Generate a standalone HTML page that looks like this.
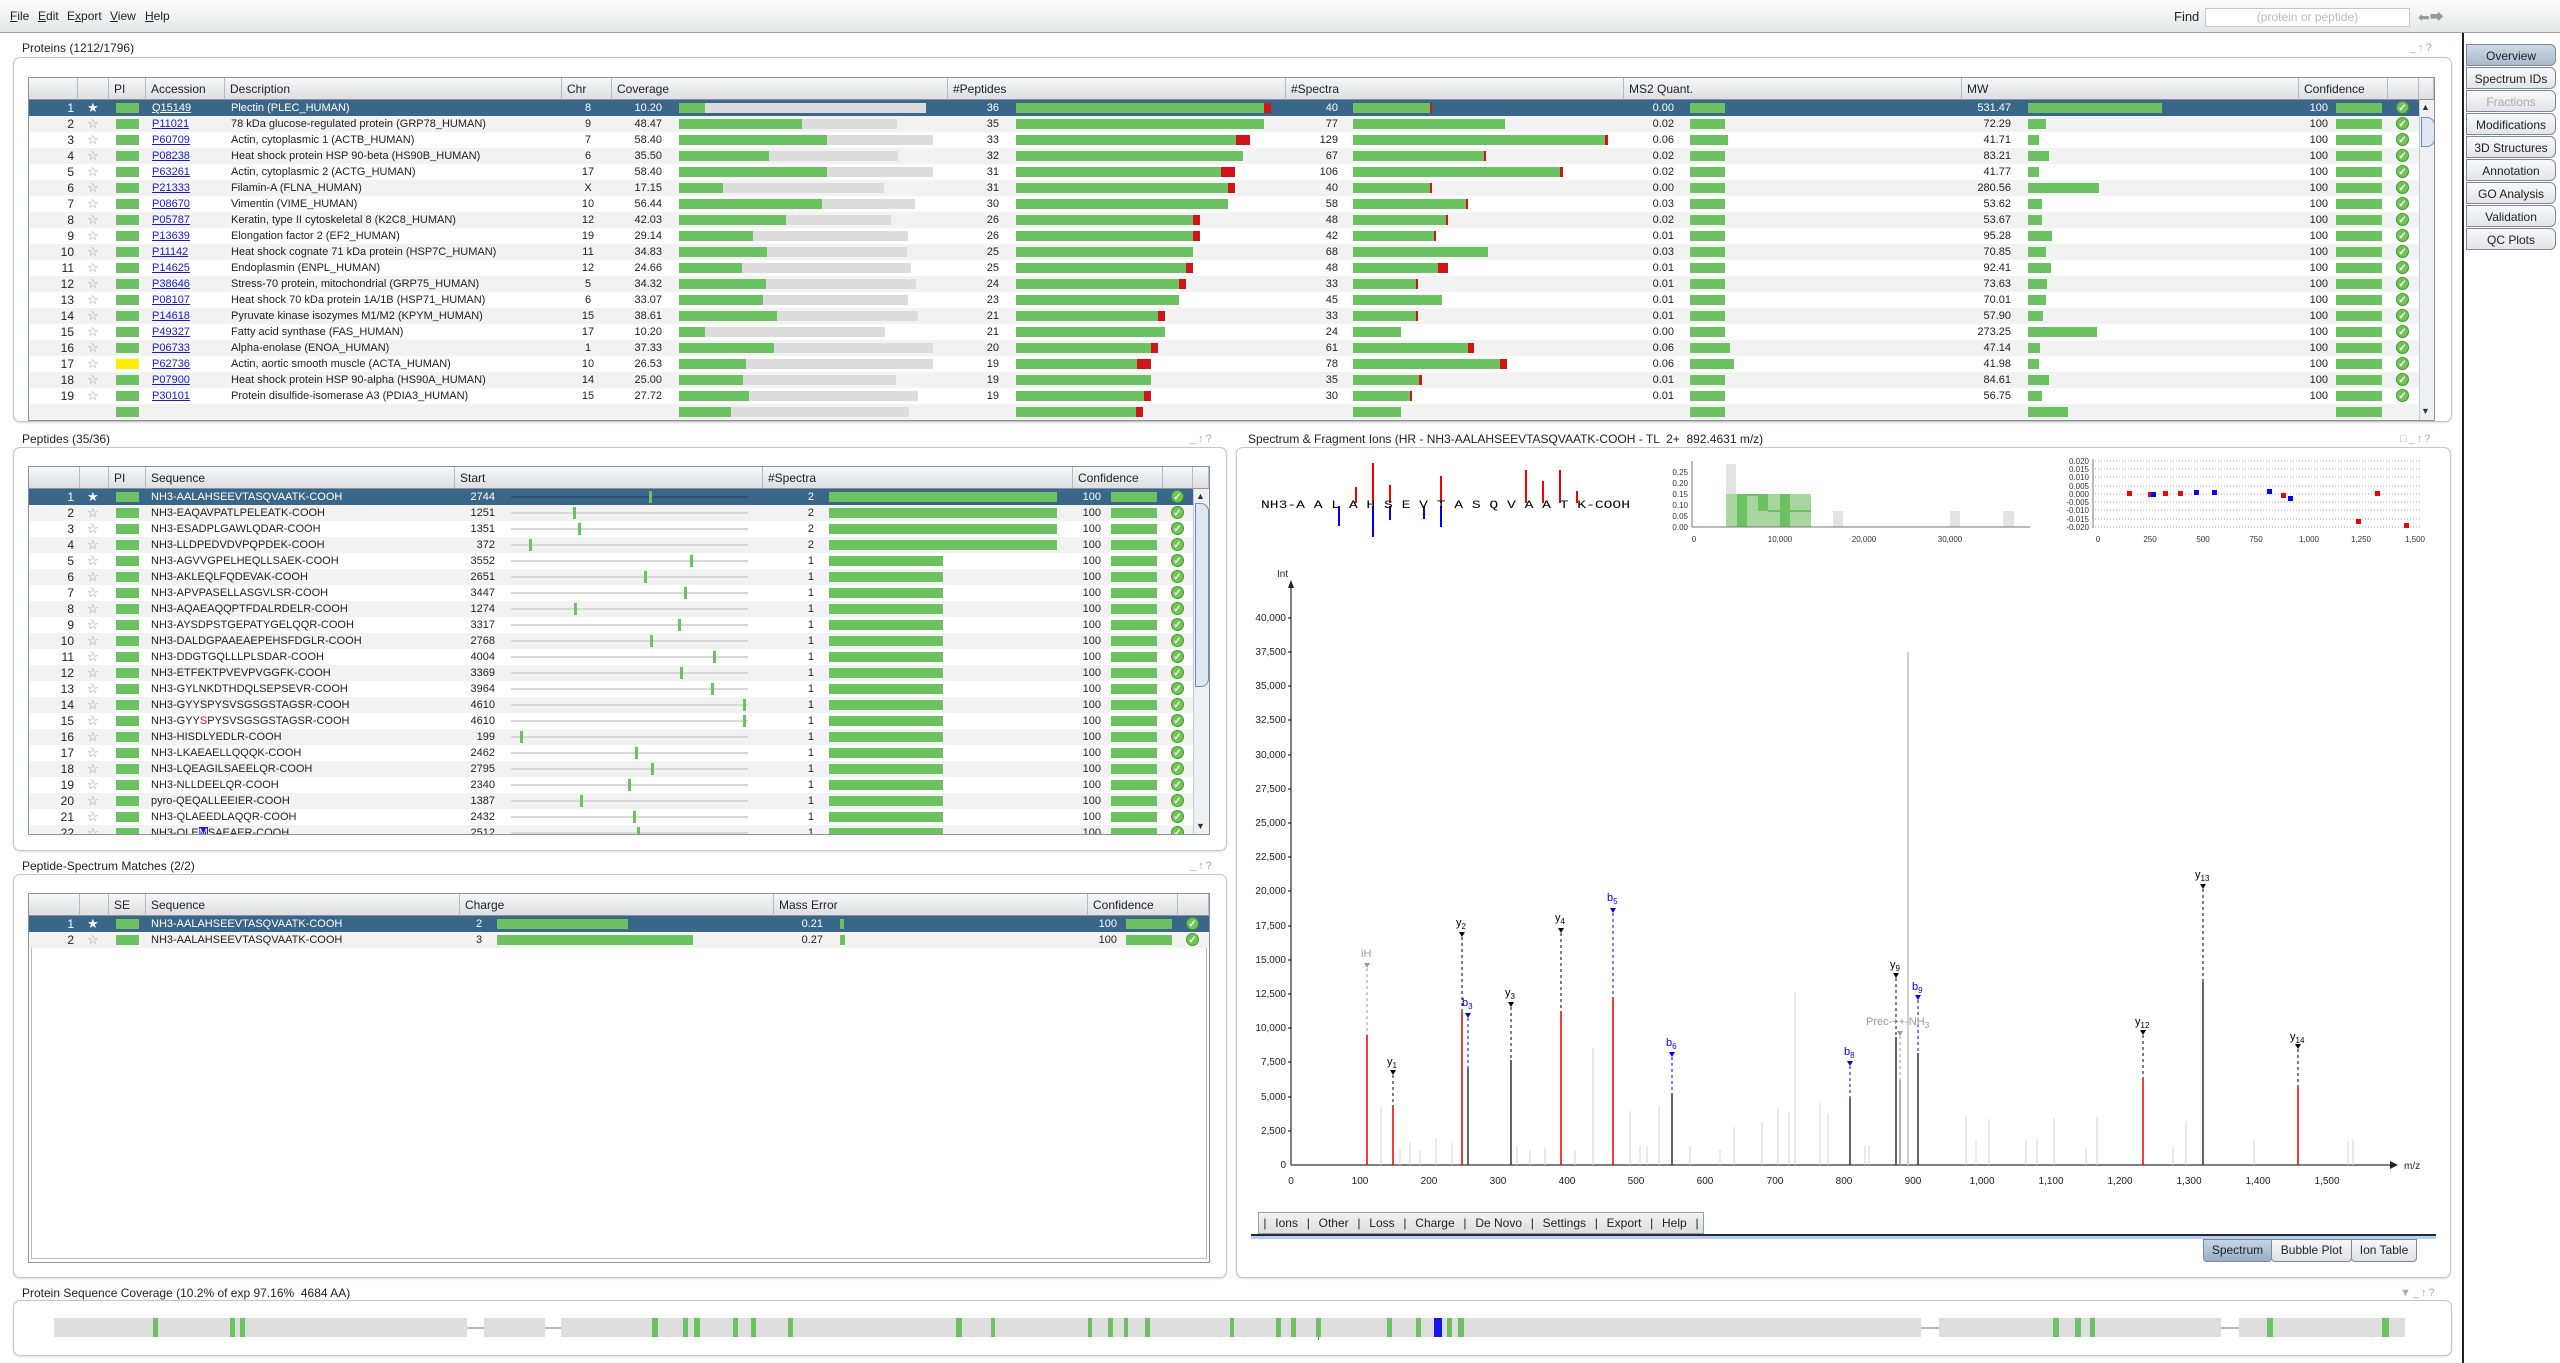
<!DOCTYPE html>
<html><head><meta charset="utf-8">
<style>
body{margin:0;width:2560px;height:1363px;position:relative;overflow:hidden;background:#fff;font-family:"Liberation Sans",sans-serif;font-size:11px;color:#222}
.a{position:absolute}
.menu{left:0;top:0;width:2560px;height:32px;background:linear-gradient(#fdfdfd,#e4e6ea);border-bottom:1px solid #9da2aa}
.menu span{position:absolute;top:9px;font-size:12px}
.panel{position:absolute;border:1px solid #c6c6c6;border-radius:7px;box-shadow:0 1px 2px #ddd;background:#fff}
.ttl{position:absolute;font-size:12px;color:#222}
.ico{position:absolute;font-size:11px;color:#aaa;letter-spacing:2px}
.tbl{position:absolute;border:1px solid #8d929a;background:#fff;overflow:hidden}
.hd{position:absolute;top:0;height:22px;background:linear-gradient(#f8f8fa,#dcdee3);border-bottom:1px solid #8d929a;border-right:1px solid #b5b9c0;box-sizing:border-box;padding-left:5px;line-height:22px;font-size:12px}
.r{position:absolute;left:0;height:16px;width:100%;line-height:16px;font-size:11px}
.o{background:#f2f2f2}
.s{background:#3a6689;color:#fff}
.r span,.r b,.r i{position:absolute}
.n{left:0;width:45px;text-align:right;font-size:12px}
.st{left:58px;color:#999;font-size:13px}
.s .st{color:#fff}
.pi{left:87px;top:3px;width:23px;height:10px;background:#6cc260}
.ac{left:123px;color:#1a1acc;text-decoration:underline}
.s .ac{color:#fff}
.ds{left:202px}
.ch{left:541px;width:36px;text-align:center}
.cv{left:590px;width:43px;text-align:right}
.pn{left:930px;width:40px;text-align:right}
.sn{left:1269px;width:40px;text-align:right}
.mn{left:1600px;width:45px;text-align:right}
.wn{left:1930px;width:52px;text-align:right}
.cn{left:2269px;width:30px;text-align:right}
.g{top:3px;height:10px;background:#6cc260}
.d{top:3px;height:10px;background:#d0151a}
.k{top:3px;height:10px;background:#dcdcdc}
.ck{top:1px;width:13px;height:13px;border-radius:50%;background:#72c456;border:1px solid #3d9a2c;color:#fff;font-size:10px;line-height:13px;text-align:center;box-sizing:border-box}
.tk{top:7px;height:2px;left:482px;width:237px;background:#d8d8d8}
.s .tk{background:#2c5374}
.mk{top:2px;width:3px;height:12px;background:#6cc260}
.sb{position:absolute;background:#eef0f3;border-left:1px solid #c8ccd2}
.btn{position:absolute;left:2466px;width:90px;height:22px;border:1px solid #7f8896;border-radius:0 6px 6px 0;background:linear-gradient(#f7f8fa,#e2e5ea);font-size:12px;text-align:center;line-height:22px;box-sizing:border-box}
.bb{position:absolute;left:1258px;top:1212px;width:444px;height:20px;background:linear-gradient(#f3f3f5,#dcdde1);border:1px solid #9a9ea6;font-size:12px;line-height:20px;color:#222;display:flex;justify-content:space-around}
</style></head><body>

<div class="a menu">
<span style="left:10px"><u>F</u>ile</span><span style="left:38px"><u>E</u>dit</span><span style="left:67px">E<u>x</u>port</span><span style="left:110px"><u>V</u>iew</span><span style="left:145px"><u>H</u>elp</span>
<span style="left:2174px;font-size:13px">Find</span>
<div class="a" style="left:2205px;top:8px;width:203px;height:17px;background:#fff;border:1px solid #c4c7cc;color:#bbb;font-size:12px;text-align:center;line-height:17px">(protein or peptide)</div>
<span style="left:2418px;top:7px;color:#999;font-size:14px">&#x2B05;&#x2B95;</span>
</div>

<div class="a" style="left:2462px;top:33px;width:2px;height:1330px;background:#1b1f2a"></div>
<div class="btn" style="top:44px;background:linear-gradient(#cfd9e5,#a9b9cc)">Overview</div>
<div class="btn" style="top:67px">Spectrum IDs</div>
<div class="btn" style="top:90px;color:#aaa">Fractions</div>
<div class="btn" style="top:113px">Modifications</div>
<div class="btn" style="top:136px">3D Structures</div>
<div class="btn" style="top:159px">Annotation</div>
<div class="btn" style="top:182px">GO Analysis</div>
<div class="btn" style="top:205px">Validation</div>
<div class="btn" style="top:228px">QC Plots</div>

<div class="ttl" style="left:22px;top:41px">Proteins (1212/1796)</div>
<div class="ico" style="left:2410px;top:42px">_&#x2191;?</div>
<div class="panel" style="left:13px;top:57px;width:2437px;height:363px"></div>
<div class="tbl" style="left:28px;top:77px;width:2405px;height:342px">
<div class="hd" style="left:0;width:49px"></div><div class="hd" style="left:49px;width:31px"></div><div class="hd" style="left:80px;width:37px">PI</div><div class="hd" style="left:117px;width:79px">Accession</div><div class="hd" style="left:196px;width:337px">Description</div><div class="hd" style="left:533px;width:50px">Chr</div><div class="hd" style="left:583px;width:336px">Coverage</div><div class="hd" style="left:919px;width:338px">#Peptides</div><div class="hd" style="left:1257px;width:338px">#Spectra</div><div class="hd" style="left:1595px;width:338px">MS2 Quant.</div><div class="hd" style="left:1933px;width:337px">MW</div><div class="hd" style="left:2270px;width:89px">Confidence</div><div class="hd" style="left:2359px;width:31px"></div><div class="hd" style="left:2390px;width:15px"></div>

<div class="r s" style="top:22px"><span class="n">1</span><span class="st">★</span><i class="pi"></i><span class="ac">Q15149</span><span class="ds">Plectin (PLEC_HUMAN)</span><span class="ch">8</span><span class="cv">10.20</span><b class="k" style="left:650px;width:247px"></b><b class="g" style="left:650px;width:26px"></b><span class="pn">36</span><b class="g" style="left:987px;width:248px"></b><b class="d" style="left:1235px;width:7px"></b><span class="sn">40</span><b class="g" style="left:1324px;width:77px"></b><b class="d" style="left:1401px;width:2px"></b><span class="mn">0.00</span><b class="g" style="left:1661px;width:35px"></b><span class="wn">531.47</span><b class="g" style="left:1999px;width:134px"></b><span class="cn">100</span><b class="g" style="left:2307px;width:46px"></b><b class="ck" style="left:2367px">✓</b></div>
<div class="r o" style="top:38px"><span class="n">2</span><span class="st">☆</span><i class="pi"></i><span class="ac">P11021</span><span class="ds">78 kDa glucose-regulated protein (GRP78_HUMAN)</span><span class="ch">9</span><span class="cv">48.47</span><b class="k" style="left:650px;width:218px"></b><b class="g" style="left:650px;width:123px"></b><span class="pn">35</span><b class="g" style="left:987px;width:248px"></b><span class="sn">77</span><b class="g" style="left:1324px;width:152px"></b><span class="mn">0.02</span><b class="g" style="left:1661px;width:35px"></b><span class="wn">72.29</span><b class="g" style="left:1999px;width:18px"></b><span class="cn">100</span><b class="g" style="left:2307px;width:46px"></b><b class="ck" style="left:2367px">✓</b></div>
<div class="r" style="top:54px"><span class="n">3</span><span class="st">☆</span><i class="pi"></i><span class="ac">P60709</span><span class="ds">Actin, cytoplasmic 1 (ACTB_HUMAN)</span><span class="ch">7</span><span class="cv">58.40</span><b class="k" style="left:650px;width:254px"></b><b class="g" style="left:650px;width:148px"></b><span class="pn">33</span><b class="g" style="left:987px;width:220px"></b><b class="d" style="left:1207px;width:14px"></b><span class="sn">129</span><b class="g" style="left:1324px;width:252px"></b><b class="d" style="left:1576px;width:3px"></b><span class="mn">0.06</span><b class="g" style="left:1661px;width:38px"></b><span class="wn">41.71</span><b class="g" style="left:1999px;width:11px"></b><span class="cn">100</span><b class="g" style="left:2307px;width:46px"></b><b class="ck" style="left:2367px">✓</b></div>
<div class="r o" style="top:70px"><span class="n">4</span><span class="st">☆</span><i class="pi"></i><span class="ac">P08238</span><span class="ds">Heat shock protein HSP 90-beta (HS90B_HUMAN)</span><span class="ch">6</span><span class="cv">35.50</span><b class="k" style="left:650px;width:219px"></b><b class="g" style="left:650px;width:90px"></b><span class="pn">32</span><b class="g" style="left:987px;width:227px"></b><span class="sn">67</span><b class="g" style="left:1324px;width:131px"></b><b class="d" style="left:1455px;width:2px"></b><span class="mn">0.02</span><b class="g" style="left:1661px;width:35px"></b><span class="wn">83.21</span><b class="g" style="left:1999px;width:21px"></b><span class="cn">100</span><b class="g" style="left:2307px;width:46px"></b><b class="ck" style="left:2367px">✓</b></div>
<div class="r" style="top:86px"><span class="n">5</span><span class="st">☆</span><i class="pi"></i><span class="ac">P63261</span><span class="ds">Actin, cytoplasmic 2 (ACTG_HUMAN)</span><span class="ch">17</span><span class="cv">58.40</span><b class="k" style="left:650px;width:254px"></b><b class="g" style="left:650px;width:148px"></b><span class="pn">31</span><b class="g" style="left:987px;width:205px"></b><b class="d" style="left:1192px;width:14px"></b><span class="sn">106</span><b class="g" style="left:1324px;width:207px"></b><b class="d" style="left:1531px;width:3px"></b><span class="mn">0.02</span><b class="g" style="left:1661px;width:35px"></b><span class="wn">41.77</span><b class="g" style="left:1999px;width:11px"></b><span class="cn">100</span><b class="g" style="left:2307px;width:46px"></b><b class="ck" style="left:2367px">✓</b></div>
<div class="r o" style="top:102px"><span class="n">6</span><span class="st">☆</span><i class="pi"></i><span class="ac">P21333</span><span class="ds">Filamin-A (FLNA_HUMAN)</span><span class="ch">X</span><span class="cv">17.15</span><b class="k" style="left:650px;width:205px"></b><b class="g" style="left:650px;width:44px"></b><span class="pn">31</span><b class="g" style="left:987px;width:212px"></b><b class="d" style="left:1199px;width:7px"></b><span class="sn">40</span><b class="g" style="left:1324px;width:77px"></b><b class="d" style="left:1401px;width:2px"></b><span class="mn">0.00</span><b class="g" style="left:1661px;width:35px"></b><span class="wn">280.56</span><b class="g" style="left:1999px;width:71px"></b><span class="cn">100</span><b class="g" style="left:2307px;width:46px"></b><b class="ck" style="left:2367px">✓</b></div>
<div class="r" style="top:118px"><span class="n">7</span><span class="st">☆</span><i class="pi"></i><span class="ac">P08670</span><span class="ds">Vimentin (VIME_HUMAN)</span><span class="ch">10</span><span class="cv">56.44</span><b class="k" style="left:650px;width:236px"></b><b class="g" style="left:650px;width:143px"></b><span class="pn">30</span><b class="g" style="left:987px;width:212px"></b><span class="sn">58</span><b class="g" style="left:1324px;width:113px"></b><b class="d" style="left:1437px;width:2px"></b><span class="mn">0.03</span><b class="g" style="left:1661px;width:35px"></b><span class="wn">53.62</span><b class="g" style="left:1999px;width:14px"></b><span class="cn">100</span><b class="g" style="left:2307px;width:46px"></b><b class="ck" style="left:2367px">✓</b></div>
<div class="r o" style="top:134px"><span class="n">8</span><span class="st">☆</span><i class="pi"></i><span class="ac">P05787</span><span class="ds">Keratin, type II cytoskeletal 8 (K2C8_HUMAN)</span><span class="ch">12</span><span class="cv">42.03</span><b class="k" style="left:650px;width:212px"></b><b class="g" style="left:650px;width:107px"></b><span class="pn">26</span><b class="g" style="left:987px;width:177px"></b><b class="d" style="left:1164px;width:7px"></b><span class="sn">48</span><b class="g" style="left:1324px;width:93px"></b><b class="d" style="left:1417px;width:2px"></b><span class="mn">0.02</span><b class="g" style="left:1661px;width:35px"></b><span class="wn">53.67</span><b class="g" style="left:1999px;width:14px"></b><span class="cn">100</span><b class="g" style="left:2307px;width:46px"></b><b class="ck" style="left:2367px">✓</b></div>
<div class="r" style="top:150px"><span class="n">9</span><span class="st">☆</span><i class="pi"></i><span class="ac">P13639</span><span class="ds">Elongation factor 2 (EF2_HUMAN)</span><span class="ch">19</span><span class="cv">29.14</span><b class="k" style="left:650px;width:229px"></b><b class="g" style="left:650px;width:74px"></b><span class="pn">26</span><b class="g" style="left:987px;width:177px"></b><b class="d" style="left:1164px;width:7px"></b><span class="sn">42</span><b class="g" style="left:1324px;width:81px"></b><b class="d" style="left:1405px;width:2px"></b><span class="mn">0.01</span><b class="g" style="left:1661px;width:35px"></b><span class="wn">95.28</span><b class="g" style="left:1999px;width:24px"></b><span class="cn">100</span><b class="g" style="left:2307px;width:46px"></b><b class="ck" style="left:2367px">✓</b></div>
<div class="r o" style="top:166px"><span class="n">10</span><span class="st">☆</span><i class="pi"></i><span class="ac">P11142</span><span class="ds">Heat shock cognate 71 kDa protein (HSP7C_HUMAN)</span><span class="ch">11</span><span class="cv">34.83</span><b class="k" style="left:650px;width:228px"></b><b class="g" style="left:650px;width:88px"></b><span class="pn">25</span><b class="g" style="left:987px;width:177px"></b><span class="sn">68</span><b class="g" style="left:1324px;width:135px"></b><span class="mn">0.03</span><b class="g" style="left:1661px;width:35px"></b><span class="wn">70.85</span><b class="g" style="left:1999px;width:18px"></b><span class="cn">100</span><b class="g" style="left:2307px;width:46px"></b><b class="ck" style="left:2367px">✓</b></div>
<div class="r" style="top:182px"><span class="n">11</span><span class="st">☆</span><i class="pi"></i><span class="ac">P14625</span><span class="ds">Endoplasmin (ENPL_HUMAN)</span><span class="ch">12</span><span class="cv">24.66</span><b class="k" style="left:650px;width:232px"></b><b class="g" style="left:650px;width:63px"></b><span class="pn">25</span><b class="g" style="left:987px;width:170px"></b><b class="d" style="left:1157px;width:7px"></b><span class="sn">48</span><b class="g" style="left:1324px;width:85px"></b><b class="d" style="left:1409px;width:10px"></b><span class="mn">0.01</span><b class="g" style="left:1661px;width:35px"></b><span class="wn">92.41</span><b class="g" style="left:1999px;width:23px"></b><span class="cn">100</span><b class="g" style="left:2307px;width:46px"></b><b class="ck" style="left:2367px">✓</b></div>
<div class="r o" style="top:198px"><span class="n">12</span><span class="st">☆</span><i class="pi"></i><span class="ac">P38646</span><span class="ds">Stress-70 protein, mitochondrial (GRP75_HUMAN)</span><span class="ch">5</span><span class="cv">34.32</span><b class="k" style="left:650px;width:237px"></b><b class="g" style="left:650px;width:87px"></b><span class="pn">24</span><b class="g" style="left:987px;width:163px"></b><b class="d" style="left:1150px;width:7px"></b><span class="sn">33</span><b class="g" style="left:1324px;width:63px"></b><b class="d" style="left:1387px;width:2px"></b><span class="mn">0.01</span><b class="g" style="left:1661px;width:35px"></b><span class="wn">73.63</span><b class="g" style="left:1999px;width:19px"></b><span class="cn">100</span><b class="g" style="left:2307px;width:46px"></b><b class="ck" style="left:2367px">✓</b></div>
<div class="r" style="top:214px"><span class="n">13</span><span class="st">☆</span><i class="pi"></i><span class="ac">P08107</span><span class="ds">Heat shock 70 kDa protein 1A/1B (HSP71_HUMAN)</span><span class="ch">6</span><span class="cv">33.07</span><b class="k" style="left:650px;width:229px"></b><b class="g" style="left:650px;width:84px"></b><span class="pn">23</span><b class="g" style="left:987px;width:163px"></b><span class="sn">45</span><b class="g" style="left:1324px;width:89px"></b><span class="mn">0.01</span><b class="g" style="left:1661px;width:35px"></b><span class="wn">70.01</span><b class="g" style="left:1999px;width:18px"></b><span class="cn">100</span><b class="g" style="left:2307px;width:46px"></b><b class="ck" style="left:2367px">✓</b></div>
<div class="r o" style="top:230px"><span class="n">14</span><span class="st">☆</span><i class="pi"></i><span class="ac">P14618</span><span class="ds">Pyruvate kinase isozymes M1/M2 (KPYM_HUMAN)</span><span class="ch">15</span><span class="cv">38.61</span><b class="k" style="left:650px;width:239px"></b><b class="g" style="left:650px;width:98px"></b><span class="pn">21</span><b class="g" style="left:987px;width:142px"></b><b class="d" style="left:1129px;width:7px"></b><span class="sn">33</span><b class="g" style="left:1324px;width:63px"></b><b class="d" style="left:1387px;width:2px"></b><span class="mn">0.01</span><b class="g" style="left:1661px;width:35px"></b><span class="wn">57.90</span><b class="g" style="left:1999px;width:15px"></b><span class="cn">100</span><b class="g" style="left:2307px;width:46px"></b><b class="ck" style="left:2367px">✓</b></div>
<div class="r" style="top:246px"><span class="n">15</span><span class="st">☆</span><i class="pi"></i><span class="ac">P49327</span><span class="ds">Fatty acid synthase (FAS_HUMAN)</span><span class="ch">17</span><span class="cv">10.20</span><b class="k" style="left:650px;width:206px"></b><b class="g" style="left:650px;width:26px"></b><span class="pn">21</span><b class="g" style="left:987px;width:149px"></b><span class="sn">24</span><b class="g" style="left:1324px;width:48px"></b><span class="mn">0.00</span><b class="g" style="left:1661px;width:35px"></b><span class="wn">273.25</span><b class="g" style="left:1999px;width:69px"></b><span class="cn">100</span><b class="g" style="left:2307px;width:46px"></b><b class="ck" style="left:2367px">✓</b></div>
<div class="r o" style="top:262px"><span class="n">16</span><span class="st">☆</span><i class="pi"></i><span class="ac">P06733</span><span class="ds">Alpha-enolase (ENOA_HUMAN)</span><span class="ch">1</span><span class="cv">37.33</span><b class="k" style="left:650px;width:254px"></b><b class="g" style="left:650px;width:95px"></b><span class="pn">20</span><b class="g" style="left:987px;width:135px"></b><b class="d" style="left:1122px;width:7px"></b><span class="sn">61</span><b class="g" style="left:1324px;width:115px"></b><b class="d" style="left:1439px;width:6px"></b><span class="mn">0.06</span><b class="g" style="left:1661px;width:40px"></b><span class="wn">47.14</span><b class="g" style="left:1999px;width:12px"></b><span class="cn">100</span><b class="g" style="left:2307px;width:46px"></b><b class="ck" style="left:2367px">✓</b></div>
<div class="r" style="top:278px"><span class="n">17</span><span class="st">☆</span><i class="pi" style="background:#ffee00"></i><span class="ac">P62736</span><span class="ds">Actin, aortic smooth muscle (ACTA_HUMAN)</span><span class="ch">10</span><span class="cv">26.53</span><b class="k" style="left:650px;width:254px"></b><b class="g" style="left:650px;width:67px"></b><span class="pn">19</span><b class="g" style="left:987px;width:121px"></b><b class="d" style="left:1108px;width:14px"></b><span class="sn">78</span><b class="g" style="left:1324px;width:147px"></b><b class="d" style="left:1471px;width:7px"></b><span class="mn">0.06</span><b class="g" style="left:1661px;width:44px"></b><span class="wn">41.98</span><b class="g" style="left:1999px;width:11px"></b><span class="cn">100</span><b class="g" style="left:2307px;width:46px"></b><b class="ck" style="left:2367px">✓</b></div>
<div class="r o" style="top:294px"><span class="n">18</span><span class="st">☆</span><i class="pi"></i><span class="ac">P07900</span><span class="ds">Heat shock protein HSP 90-alpha (HS90A_HUMAN)</span><span class="ch">14</span><span class="cv">25.00</span><b class="k" style="left:650px;width:217px"></b><b class="g" style="left:650px;width:64px"></b><span class="pn">19</span><b class="g" style="left:987px;width:135px"></b><span class="sn">35</span><b class="g" style="left:1324px;width:66px"></b><b class="d" style="left:1390px;width:3px"></b><span class="mn">0.01</span><b class="g" style="left:1661px;width:35px"></b><span class="wn">84.61</span><b class="g" style="left:1999px;width:21px"></b><span class="cn">100</span><b class="g" style="left:2307px;width:46px"></b><b class="ck" style="left:2367px">✓</b></div>
<div class="r" style="top:310px"><span class="n">19</span><span class="st">☆</span><i class="pi"></i><span class="ac">P30101</span><span class="ds">Protein disulfide-isomerase A3 (PDIA3_HUMAN)</span><span class="ch">15</span><span class="cv">27.72</span><b class="k" style="left:650px;width:239px"></b><b class="g" style="left:650px;width:70px"></b><span class="pn">19</span><b class="g" style="left:987px;width:128px"></b><b class="d" style="left:1115px;width:7px"></b><span class="sn">30</span><b class="g" style="left:1324px;width:57px"></b><b class="d" style="left:1381px;width:2px"></b><span class="mn">0.01</span><b class="g" style="left:1661px;width:35px"></b><span class="wn">56.75</span><b class="g" style="left:1999px;width:14px"></b><span class="cn">100</span><b class="g" style="left:2307px;width:46px"></b><b class="ck" style="left:2367px">✓</b></div>
<div class="r o" style="top:326px"><i class="pi"></i><b class="k" style="left:650px;width:230px"></b><b class="g" style="left:650px;width:52px"></b><b class="g" style="left:987px;width:120px"></b><b class="d" style="left:1107px;width:7px"></b><b class="g" style="left:1324px;width:48px"></b><b class="g" style="left:1661px;width:35px"></b><b class="g" style="left:1999px;width:40px"></b><b class="g" style="left:2307px;width:46px"></b></div>
<div class="sb" style="left:2390px;top:22px;width:15px;height:320px"></div>
<div class="a" style="left:2392px;top:24px;font-size:9px;color:#333">▲</div>
<div class="a" style="left:2392px;top:39px;width:12px;height:28px;border:1px solid #6e8db0;border-radius:0 8px 8px 0;background:#dde6f1"></div>
<div class="a" style="left:2392px;top:328px;font-size:9px;color:#333">▼</div>
</div>

<div class="ttl" style="left:22px;top:432px">Peptides (35/36)</div>
<div class="ico" style="left:1190px;top:433px">_&#x2191;?</div>
<div class="panel" style="left:13px;top:447px;width:1212px;height:402px"></div>
<div class="tbl" style="left:28px;top:466px;width:1180px;height:367px">
<div class="hd" style="left:0;width:51px"></div><div class="hd" style="left:51px;width:29px"></div><div class="hd" style="left:80px;width:37px">PI</div><div class="hd" style="left:117px;width:309px">Sequence</div><div class="hd" style="left:426px;width:308px">Start</div><div class="hd" style="left:734px;width:310px">#Spectra</div><div class="hd" style="left:1044px;width:90px">Confidence</div><div class="hd" style="left:1134px;width:30px"></div><div class="hd" style="left:1164px;width:16px"></div>
<div class="r s" style="top:22px"><span class="n">1</span><span class="st">★</span><i class="pi"></i><span style="left:122px">NH3-AALAHSEEVTASQVAATK-COOH</span><span style="left:426px;width:40px;text-align:right">2744</span><b class="tk"></b><b class="mk" style="left:620px"></b><span style="left:745px;width:40px;text-align:right">2</span><b class="g" style="left:800px;width:228px"></b><span style="left:1042px;width:30px;text-align:right">100</span><b class="g" style="left:1082px;width:46px"></b><b class="ck" style="left:1142px">✓</b></div>
<div class="r o" style="top:38px"><span class="n">2</span><span class="st">☆</span><i class="pi"></i><span style="left:122px">NH3-EAQAVPATLPELEATK-COOH</span><span style="left:426px;width:40px;text-align:right">1251</span><b class="tk"></b><b class="mk" style="left:544px"></b><span style="left:745px;width:40px;text-align:right">2</span><b class="g" style="left:800px;width:228px"></b><span style="left:1042px;width:30px;text-align:right">100</span><b class="g" style="left:1082px;width:46px"></b><b class="ck" style="left:1142px">✓</b></div>
<div class="r" style="top:54px"><span class="n">3</span><span class="st">☆</span><i class="pi"></i><span style="left:122px">NH3-ESADPLGAWLQDAR-COOH</span><span style="left:426px;width:40px;text-align:right">1351</span><b class="tk"></b><b class="mk" style="left:549px"></b><span style="left:745px;width:40px;text-align:right">2</span><b class="g" style="left:800px;width:228px"></b><span style="left:1042px;width:30px;text-align:right">100</span><b class="g" style="left:1082px;width:46px"></b><b class="ck" style="left:1142px">✓</b></div>
<div class="r o" style="top:70px"><span class="n">4</span><span class="st">☆</span><i class="pi"></i><span style="left:122px">NH3-LLDPEDVDVPQPDEK-COOH</span><span style="left:426px;width:40px;text-align:right">372</span><b class="tk"></b><b class="mk" style="left:500px"></b><span style="left:745px;width:40px;text-align:right">2</span><b class="g" style="left:800px;width:228px"></b><span style="left:1042px;width:30px;text-align:right">100</span><b class="g" style="left:1082px;width:46px"></b><b class="ck" style="left:1142px">✓</b></div>
<div class="r" style="top:86px"><span class="n">5</span><span class="st">☆</span><i class="pi"></i><span style="left:122px">NH3-AGVVGPELHEQLLSAEK-COOH</span><span style="left:426px;width:40px;text-align:right">3552</span><b class="tk"></b><b class="mk" style="left:661px"></b><span style="left:745px;width:40px;text-align:right">1</span><b class="g" style="left:800px;width:114px"></b><span style="left:1042px;width:30px;text-align:right">100</span><b class="g" style="left:1082px;width:46px"></b><b class="ck" style="left:1142px">✓</b></div>
<div class="r o" style="top:102px"><span class="n">6</span><span class="st">☆</span><i class="pi"></i><span style="left:122px">NH3-AKLEQLFQDEVAK-COOH</span><span style="left:426px;width:40px;text-align:right">2651</span><b class="tk"></b><b class="mk" style="left:615px"></b><span style="left:745px;width:40px;text-align:right">1</span><b class="g" style="left:800px;width:114px"></b><span style="left:1042px;width:30px;text-align:right">100</span><b class="g" style="left:1082px;width:46px"></b><b class="ck" style="left:1142px">✓</b></div>
<div class="r" style="top:118px"><span class="n">7</span><span class="st">☆</span><i class="pi"></i><span style="left:122px">NH3-APVPASELLASGVLSR-COOH</span><span style="left:426px;width:40px;text-align:right">3447</span><b class="tk"></b><b class="mk" style="left:655px"></b><span style="left:745px;width:40px;text-align:right">1</span><b class="g" style="left:800px;width:114px"></b><span style="left:1042px;width:30px;text-align:right">100</span><b class="g" style="left:1082px;width:46px"></b><b class="ck" style="left:1142px">✓</b></div>
<div class="r o" style="top:134px"><span class="n">8</span><span class="st">☆</span><i class="pi"></i><span style="left:122px">NH3-AQAEAQQPTFDALRDELR-COOH</span><span style="left:426px;width:40px;text-align:right">1274</span><b class="tk"></b><b class="mk" style="left:545px"></b><span style="left:745px;width:40px;text-align:right">1</span><b class="g" style="left:800px;width:114px"></b><span style="left:1042px;width:30px;text-align:right">100</span><b class="g" style="left:1082px;width:46px"></b><b class="ck" style="left:1142px">✓</b></div>
<div class="r" style="top:150px"><span class="n">9</span><span class="st">☆</span><i class="pi"></i><span style="left:122px">NH3-AYSDPSTGEPATYGELQQR-COOH</span><span style="left:426px;width:40px;text-align:right">3317</span><b class="tk"></b><b class="mk" style="left:649px"></b><span style="left:745px;width:40px;text-align:right">1</span><b class="g" style="left:800px;width:114px"></b><span style="left:1042px;width:30px;text-align:right">100</span><b class="g" style="left:1082px;width:46px"></b><b class="ck" style="left:1142px">✓</b></div>
<div class="r o" style="top:166px"><span class="n">10</span><span class="st">☆</span><i class="pi"></i><span style="left:122px">NH3-DALDGPAAEAEPEHSFDGLR-COOH</span><span style="left:426px;width:40px;text-align:right">2768</span><b class="tk"></b><b class="mk" style="left:621px"></b><span style="left:745px;width:40px;text-align:right">1</span><b class="g" style="left:800px;width:114px"></b><span style="left:1042px;width:30px;text-align:right">100</span><b class="g" style="left:1082px;width:46px"></b><b class="ck" style="left:1142px">✓</b></div>
<div class="r" style="top:182px"><span class="n">11</span><span class="st">☆</span><i class="pi"></i><span style="left:122px">NH3-DDGTGQLLLPLSDAR-COOH</span><span style="left:426px;width:40px;text-align:right">4004</span><b class="tk"></b><b class="mk" style="left:684px"></b><span style="left:745px;width:40px;text-align:right">1</span><b class="g" style="left:800px;width:114px"></b><span style="left:1042px;width:30px;text-align:right">100</span><b class="g" style="left:1082px;width:46px"></b><b class="ck" style="left:1142px">✓</b></div>
<div class="r o" style="top:198px"><span class="n">12</span><span class="st">☆</span><i class="pi"></i><span style="left:122px">NH3-ETFEKTPVEVPVGGFK-COOH</span><span style="left:426px;width:40px;text-align:right">3369</span><b class="tk"></b><b class="mk" style="left:651px"></b><span style="left:745px;width:40px;text-align:right">1</span><b class="g" style="left:800px;width:114px"></b><span style="left:1042px;width:30px;text-align:right">100</span><b class="g" style="left:1082px;width:46px"></b><b class="ck" style="left:1142px">✓</b></div>
<div class="r" style="top:214px"><span class="n">13</span><span class="st">☆</span><i class="pi"></i><span style="left:122px">NH3-GYLNKDTHDQLSEPSEVR-COOH</span><span style="left:426px;width:40px;text-align:right">3964</span><b class="tk"></b><b class="mk" style="left:682px"></b><span style="left:745px;width:40px;text-align:right">1</span><b class="g" style="left:800px;width:114px"></b><span style="left:1042px;width:30px;text-align:right">100</span><b class="g" style="left:1082px;width:46px"></b><b class="ck" style="left:1142px">✓</b></div>
<div class="r o" style="top:230px"><span class="n">14</span><span class="st">☆</span><i class="pi"></i><span style="left:122px">NH3-GYYSPYSVSGSGSTAGSR-COOH</span><span style="left:426px;width:40px;text-align:right">4610</span><b class="tk"></b><b class="mk" style="left:714px"></b><span style="left:745px;width:40px;text-align:right">1</span><b class="g" style="left:800px;width:114px"></b><span style="left:1042px;width:30px;text-align:right">100</span><b class="g" style="left:1082px;width:46px"></b><b class="ck" style="left:1142px">✓</b></div>
<div class="r" style="top:246px"><span class="n">15</span><span class="st">☆</span><i class="pi"></i><span style="left:122px">NH3-GYY<span style="position:static;color:#e01010">S</span>PYSVSGSGSTAGSR-COOH</span><span style="left:426px;width:40px;text-align:right">4610</span><b class="tk"></b><b class="mk" style="left:714px"></b><span style="left:745px;width:40px;text-align:right">1</span><b class="g" style="left:800px;width:114px"></b><span style="left:1042px;width:30px;text-align:right">100</span><b class="g" style="left:1082px;width:46px"></b><b class="ck" style="left:1142px">✓</b></div>
<div class="r o" style="top:262px"><span class="n">16</span><span class="st">☆</span><i class="pi"></i><span style="left:122px">NH3-HISDLYEDLR-COOH</span><span style="left:426px;width:40px;text-align:right">199</span><b class="tk"></b><b class="mk" style="left:491px"></b><span style="left:745px;width:40px;text-align:right">1</span><b class="g" style="left:800px;width:114px"></b><span style="left:1042px;width:30px;text-align:right">100</span><b class="g" style="left:1082px;width:46px"></b><b class="ck" style="left:1142px">✓</b></div>
<div class="r" style="top:278px"><span class="n">17</span><span class="st">☆</span><i class="pi"></i><span style="left:122px">NH3-LKAEAELLQQQK-COOH</span><span style="left:426px;width:40px;text-align:right">2462</span><b class="tk"></b><b class="mk" style="left:606px"></b><span style="left:745px;width:40px;text-align:right">1</span><b class="g" style="left:800px;width:114px"></b><span style="left:1042px;width:30px;text-align:right">100</span><b class="g" style="left:1082px;width:46px"></b><b class="ck" style="left:1142px">✓</b></div>
<div class="r o" style="top:294px"><span class="n">18</span><span class="st">☆</span><i class="pi"></i><span style="left:122px">NH3-LQEAGILSAEELQR-COOH</span><span style="left:426px;width:40px;text-align:right">2795</span><b class="tk"></b><b class="mk" style="left:622px"></b><span style="left:745px;width:40px;text-align:right">1</span><b class="g" style="left:800px;width:114px"></b><span style="left:1042px;width:30px;text-align:right">100</span><b class="g" style="left:1082px;width:46px"></b><b class="ck" style="left:1142px">✓</b></div>
<div class="r" style="top:310px"><span class="n">19</span><span class="st">☆</span><i class="pi"></i><span style="left:122px">NH3-NLLDEELQR-COOH</span><span style="left:426px;width:40px;text-align:right">2340</span><b class="tk"></b><b class="mk" style="left:599px"></b><span style="left:745px;width:40px;text-align:right">1</span><b class="g" style="left:800px;width:114px"></b><span style="left:1042px;width:30px;text-align:right">100</span><b class="g" style="left:1082px;width:46px"></b><b class="ck" style="left:1142px">✓</b></div>
<div class="r o" style="top:326px"><span class="n">20</span><span class="st">☆</span><i class="pi"></i><span style="left:122px">pyro-QEQALLEEIER-COOH</span><span style="left:426px;width:40px;text-align:right">1387</span><b class="tk"></b><b class="mk" style="left:551px"></b><span style="left:745px;width:40px;text-align:right">1</span><b class="g" style="left:800px;width:114px"></b><span style="left:1042px;width:30px;text-align:right">100</span><b class="g" style="left:1082px;width:46px"></b><b class="ck" style="left:1142px">✓</b></div>
<div class="r" style="top:342px"><span class="n">21</span><span class="st">☆</span><i class="pi"></i><span style="left:122px">NH3-QLAEEDLAQQR-COOH</span><span style="left:426px;width:40px;text-align:right">2432</span><b class="tk"></b><b class="mk" style="left:604px"></b><span style="left:745px;width:40px;text-align:right">1</span><b class="g" style="left:800px;width:114px"></b><span style="left:1042px;width:30px;text-align:right">100</span><b class="g" style="left:1082px;width:46px"></b><b class="ck" style="left:1142px">✓</b></div>
<div class="r o" style="top:358px"><span class="n">22</span><span class="st">☆</span><i class="pi"></i><span style="left:122px">NH3-QLE<span style="position:static;background:#1a1aee;color:#fff">M</span>SAEAER-COOH</span><span style="left:426px;width:40px;text-align:right">2512</span><b class="tk"></b><b class="mk" style="left:608px"></b><span style="left:745px;width:40px;text-align:right">1</span><b class="g" style="left:800px;width:114px"></b><span style="left:1042px;width:30px;text-align:right">100</span><b class="g" style="left:1082px;width:46px"></b><b class="ck" style="left:1142px">✓</b></div>
<div class="sb" style="left:1164px;top:22px;width:16px;height:345px"></div>
<div class="a" style="left:1167px;top:24px;font-size:9px;color:#333">▲</div>
<div class="a" style="left:1166px;top:36px;width:12px;height:182px;border:1px solid #6e8db0;border-radius:0 8px 8px 0;background:#dde6f1"></div>
<div class="a" style="left:1167px;top:354px;font-size:9px;color:#333">▼</div>
</div>

<div class="ttl" style="left:22px;top:859px">Peptide-Spectrum Matches (2/2)</div>
<div class="ico" style="left:1190px;top:860px">_&#x2191;?</div>
<div class="panel" style="left:13px;top:874px;width:1212px;height:402px"></div>
<div class="tbl" style="left:28px;top:893px;width:1180px;height:368px">
<div class="hd" style="left:0;width:51px"></div><div class="hd" style="left:51px;width:29px"></div><div class="hd" style="left:80px;width:37px">SE</div><div class="hd" style="left:117px;width:314px">Sequence</div><div class="hd" style="left:431px;width:314px">Charge</div><div class="hd" style="left:745px;width:314px">Mass Error</div><div class="hd" style="left:1059px;width:90px">Confidence</div><div class="hd" style="left:1149px;width:31px"></div>
<div class="r s" style="top:22px"><span class="n">1</span><span class="st">★</span><i class="pi"></i><span style="left:122px">NH3-AALAHSEEVTASQVAATK-COOH</span><span style="left:447px">2</span><b class="g" style="left:468px;width:131px"></b><span style="left:764px;width:30px;text-align:right">0.21</span><b class="g" style="left:811px;width:4px"></b><span style="left:1058px;width:30px;text-align:right">100</span><b class="g" style="left:1097px;width:46px"></b><b class="ck" style="left:1157px">✓</b></div>
<div class="r o" style="top:38px"><span class="n">2</span><span class="st">☆</span><i class="pi"></i><span style="left:122px">NH3-AALAHSEEVTASQVAATK-COOH</span><span style="left:447px">3</span><b class="g" style="left:468px;width:196px"></b><span style="left:764px;width:30px;text-align:right">0.27</span><b class="g" style="left:811px;width:5px"></b><span style="left:1058px;width:30px;text-align:right">100</span><b class="g" style="left:1097px;width:46px"></b><b class="ck" style="left:1157px">✓</b></div>
<div class="a" style="left:2px;top:54px;width:1174px;height:310px;border:1px solid #b8bcc4;border-top:none"></div>
</div>

<div class="ttl" style="left:1248px;top:432px">Spectrum &amp; Fragment Ions (HR - NH3-AALAHSEEVTASQVAATK-COOH - TL &nbsp;2+ &nbsp;892.4631 m/z)</div>
<div class="ico" style="left:2400px;top:433px">&#x25A1;_&#x2191;?</div>
<div class="panel" style="left:1236px;top:447px;width:1213px;height:829px"></div>

<svg class="a" style="left:1236px;top:447px" width="1214" height="790" viewBox="1236 447 1214 790" font-family="Liberation Sans, sans-serif">
<g stroke-width="2">
<line x1="1356" y1="487" x2="1356" y2="503" stroke="#e00"/><line x1="1373" y1="463" x2="1373" y2="503" stroke="#e00"/><line x1="1390" y1="485" x2="1390" y2="503" stroke="#e00"/><line x1="1441" y1="476" x2="1441" y2="503" stroke="#e00"/><line x1="1526" y1="470" x2="1526" y2="503" stroke="#e00"/><line x1="1543" y1="481" x2="1543" y2="503" stroke="#e00"/><line x1="1560" y1="470" x2="1560" y2="503" stroke="#e00"/><line x1="1577" y1="491" x2="1577" y2="503" stroke="#e00"/>
<line x1="1339" y1="506" x2="1339" y2="526" stroke="#00e"/><line x1="1373" y1="506" x2="1373" y2="537" stroke="#00e"/><line x1="1390" y1="506" x2="1390" y2="520" stroke="#00e"/><line x1="1424" y1="506" x2="1424" y2="519" stroke="#00e"/><line x1="1441" y1="506" x2="1441" y2="527" stroke="#00e"/>
</g>
<text x="1261" y="508" font-family="Liberation Mono, monospace" font-size="11" textLength="369" lengthAdjust="spacingAndGlyphs">NH3-A A L A H S E V T A S Q V A A T K-COOH</text>
<g font-size="8" fill="#333">
<rect x="1726" y="464" width="10" height="63" fill="#e3e3e3"/>
<rect x="1726" y="494" width="85" height="33" fill="#a9d6a0"/>
<rect x="1737" y="494" width="10" height="33" fill="#6cc260"/><rect x="1758" y="494" width="10" height="17" fill="#6cc260"/><rect x="1780" y="494" width="10" height="33" fill="#6cc260"/>
<rect x="1747" y="494" width="11" height="2" fill="#6cc260"/><rect x="1768" y="510" width="12" height="2" fill="#6cc260"/><rect x="1790" y="510" width="21" height="2" fill="#6cc260"/>
<rect x="1833" y="511" width="10" height="16" fill="#e3e3e3"/><rect x="1950" y="511" width="10" height="16" fill="#e3e3e3"/><rect x="2003" y="511" width="11" height="16" fill="#e3e3e3"/>
<line x1="1692" y1="461" x2="1692" y2="527" stroke="#777"/><line x1="1692" y1="527" x2="2030" y2="527" stroke="#777"/>
<text x="1688" y="475" text-anchor="end">0.25</text><text x="1688" y="486" text-anchor="end">0.20</text><text x="1688" y="497" text-anchor="end">0.15</text><text x="1688" y="508" text-anchor="end">0.10</text><text x="1688" y="519" text-anchor="end">0.05</text><text x="1688" y="530" text-anchor="end">0.00</text>
<text x="1694" y="542" text-anchor="middle">0</text><text x="1780" y="542" text-anchor="middle">10,000</text><text x="1864" y="542" text-anchor="middle">20,000</text><text x="1950" y="542" text-anchor="middle">30,000</text>
</g>
<g font-size="8" fill="#333">
<g stroke="#aaa" stroke-dasharray="1,2"><line x1="2095" y1="461" x2="2422" y2="461"/><line x1="2095" y1="469" x2="2422" y2="469"/><line x1="2095" y1="477" x2="2422" y2="477"/><line x1="2095" y1="486" x2="2422" y2="486"/><line x1="2095" y1="494" x2="2422" y2="494"/><line x1="2095" y1="502" x2="2422" y2="502"/><line x1="2095" y1="510" x2="2422" y2="510"/><line x1="2095" y1="519" x2="2422" y2="519"/><line x1="2095" y1="527" x2="2422" y2="527"/></g>
<line x1="2093" y1="459" x2="2093" y2="528" stroke="#777"/>
<text x="2089" y="464" text-anchor="end">0.020</text><text x="2089" y="472" text-anchor="end">0.015</text><text x="2089" y="480" text-anchor="end">0.010</text><text x="2089" y="489" text-anchor="end">0.005</text><text x="2089" y="497" text-anchor="end">0.000</text><text x="2089" y="505" text-anchor="end">-0.005</text><text x="2089" y="513" text-anchor="end">-0.010</text><text x="2089" y="522" text-anchor="end">-0.015</text><text x="2089" y="530" text-anchor="end">-0.020</text>
<text x="2098" y="542" text-anchor="middle">0</text><text x="2150" y="542" text-anchor="middle">250</text><text x="2203" y="542" text-anchor="middle">500</text><text x="2256" y="542" text-anchor="middle">750</text><text x="2309" y="542" text-anchor="middle">1,000</text><text x="2361" y="542" text-anchor="middle">1,250</text><text x="2415" y="542" text-anchor="middle">1,500</text>
<g fill="#e00"><rect x="2127" y="491" width="5" height="5"/><rect x="2148" y="492" width="5" height="5"/><rect x="2163" y="491" width="5" height="5"/><rect x="2178" y="491" width="5" height="5"/><rect x="2281" y="493" width="5" height="5"/><rect x="2375" y="491" width="5" height="5"/><rect x="2356" y="519" width="5" height="5"/><rect x="2404" y="523" width="5" height="5"/></g>
<g fill="#00e"><rect x="2151" y="492" width="5" height="5"/><rect x="2194" y="490" width="5" height="5"/><rect x="2212" y="490" width="5" height="5"/><rect x="2267" y="489" width="5" height="5"/><rect x="2288" y="496" width="5" height="5"/></g>
</g>
<g font-size="10" fill="#222">
<text x="1277" y="577">Int</text>
<line x1="1291" y1="583" x2="1291" y2="1165" stroke="#000"/><path d="M1288 588 L1291 580 L1294 588 Z"/>
<line x1="1291" y1="1165" x2="2392" y2="1165" stroke="#000"/><path d="M2390 1161 L2398 1165 L2390 1169 Z"/>
<text x="2404" y="1169">m/z</text>
<g text-anchor="end">
<text x="1286" y="1168">0</text><text x="1286" y="1134">2,500</text><text x="1286" y="1100">5,000</text><text x="1286" y="1065">7,500</text><text x="1286" y="1031">10,000</text><text x="1286" y="997">12,500</text><text x="1286" y="963">15,000</text><text x="1286" y="929">17,500</text><text x="1286" y="894">20,000</text><text x="1286" y="860">22,500</text><text x="1286" y="826">25,000</text><text x="1286" y="792">27,500</text><text x="1286" y="758">30,000</text><text x="1286" y="723">32,500</text><text x="1286" y="689">35,000</text><text x="1286" y="655">37,500</text><text x="1286" y="621">40,000</text>
</g>
<g stroke="#000"><line x1="1288" y1="1131" x2="1291" y2="1131"/><line x1="1288" y1="1097" x2="1291" y2="1097"/><line x1="1288" y1="1062" x2="1291" y2="1062"/><line x1="1288" y1="1028" x2="1291" y2="1028"/><line x1="1288" y1="994" x2="1291" y2="994"/><line x1="1288" y1="960" x2="1291" y2="960"/><line x1="1288" y1="926" x2="1291" y2="926"/><line x1="1288" y1="891" x2="1291" y2="891"/><line x1="1288" y1="857" x2="1291" y2="857"/><line x1="1288" y1="823" x2="1291" y2="823"/><line x1="1288" y1="789" x2="1291" y2="789"/><line x1="1288" y1="755" x2="1291" y2="755"/><line x1="1288" y1="720" x2="1291" y2="720"/><line x1="1288" y1="686" x2="1291" y2="686"/><line x1="1288" y1="652" x2="1291" y2="652"/><line x1="1288" y1="618" x2="1291" y2="618"/></g>
<g text-anchor="middle">
<text x="1291" y="1184">0</text><text x="1360" y="1184">100</text><text x="1429" y="1184">200</text><text x="1498" y="1184">300</text><text x="1567" y="1184">400</text><text x="1636" y="1184">500</text><text x="1705" y="1184">600</text><text x="1775" y="1184">700</text><text x="1844" y="1184">800</text><text x="1913" y="1184">900</text><text x="1982" y="1184">1,000</text><text x="2051" y="1184">1,100</text><text x="2120" y="1184">1,200</text><text x="2189" y="1184">1,300</text><text x="2258" y="1184">1,400</text><text x="2327" y="1184">1,500</text>
</g>
</g>
<g stroke="#d4d4d4" stroke-width="1">
<line x1="1381" y1="1165" x2="1381" y2="1107"/><line x1="1436" y1="1165" x2="1436" y2="1138"/><line x1="1593" y1="1165" x2="1593" y2="1048"/><line x1="1630" y1="1165" x2="1630" y2="1111"/><line x1="1659" y1="1165" x2="1659" y2="1106"/><line x1="1734" y1="1165" x2="1734" y2="1127"/><line x1="1762" y1="1165" x2="1762" y2="1122"/><line x1="1778" y1="1165" x2="1778" y2="1109"/><line x1="1789" y1="1165" x2="1789" y2="1113"/><line x1="1795" y1="1165" x2="1795" y2="992"/><line x1="1820" y1="1165" x2="1820" y2="1103"/><line x1="1828" y1="1165" x2="1828" y2="1113"/><line x1="1966" y1="1165" x2="1966" y2="1117"/><line x1="1976" y1="1165" x2="1976" y2="1141"/><line x1="1989" y1="1165" x2="1989" y2="1119"/><line x1="2026" y1="1165" x2="2026" y2="1141"/><line x1="2037" y1="1165" x2="2037" y2="1139"/><line x1="2054" y1="1165" x2="2054" y2="1118"/><line x1="2086" y1="1165" x2="2086" y2="1149"/><line x1="2097" y1="1165" x2="2097" y2="1117"/><line x1="2173" y1="1165" x2="2173" y2="1147"/><line x1="2186" y1="1165" x2="2186" y2="1121"/><line x1="2254" y1="1165" x2="2254" y2="1140"/><line x1="2348" y1="1165" x2="2348" y2="1141"/><line x1="2353" y1="1165" x2="2353" y2="1140"/>
<line x1="1400" y1="1165" x2="1400" y2="1148"/><line x1="1410" y1="1165" x2="1410" y2="1142"/><line x1="1420" y1="1165" x2="1420" y2="1150"/><line x1="1452" y1="1165" x2="1452" y2="1143"/><line x1="1517" y1="1165" x2="1517" y2="1146"/><line x1="1530" y1="1165" x2="1530" y2="1150"/><line x1="1545" y1="1165" x2="1545" y2="1148"/><line x1="1575" y1="1165" x2="1575" y2="1150"/><line x1="1640" y1="1165" x2="1640" y2="1146"/><line x1="1647" y1="1165" x2="1647" y2="1146"/><line x1="1690" y1="1165" x2="1690" y2="1146"/><line x1="1720" y1="1165" x2="1720" y2="1150"/><line x1="1865" y1="1165" x2="1865" y2="1146"/><line x1="1869" y1="1165" x2="1869" y2="1146"/>
<line x1="1908" y1="1165" x2="1908" y2="652" stroke="#cfcfcf" stroke-width="2"/>
</g>
<g stroke-width="1.5">
<line x1="1367" y1="1165" x2="1367" y2="1035" stroke="#e00"/><line x1="1393" y1="1165" x2="1393" y2="1106" stroke="#e00"/><line x1="1462" y1="1165" x2="1462" y2="1012" stroke="#e00"/><line x1="1468" y1="1165" x2="1468" y2="1068" stroke="#333"/><line x1="1511" y1="1165" x2="1511" y2="1060" stroke="#333"/><line x1="1561" y1="1165" x2="1561" y2="1011" stroke="#e00"/><line x1="1613" y1="1165" x2="1613" y2="998" stroke="#e00"/><line x1="1672" y1="1165" x2="1672" y2="1094" stroke="#333"/><line x1="1850" y1="1165" x2="1850" y2="1098" stroke="#333"/><line x1="1896" y1="1165" x2="1896" y2="1037" stroke="#333"/><line x1="1900" y1="1165" x2="1900" y2="1080" stroke="#999"/><line x1="1918" y1="1165" x2="1918" y2="1053" stroke="#333"/><line x1="2143" y1="1165" x2="2143" y2="1079" stroke="#e00"/><line x1="2203" y1="1165" x2="2203" y2="982" stroke="#333"/><line x1="2298" y1="1165" x2="2298" y2="1088" stroke="#e00"/>
</g>
<g stroke-dasharray="3,3" stroke-width="1">
<line x1="1367" y1="968" x2="1367" y2="1035" stroke="#999"/><line x1="1393" y1="1075" x2="1393" y2="1106" stroke="#000"/><line x1="1462" y1="937" x2="1462" y2="1012" stroke="#000"/><line x1="1468" y1="1018" x2="1468" y2="1068" stroke="#00e"/><line x1="1511" y1="1007" x2="1511" y2="1060" stroke="#000"/><line x1="1561" y1="933" x2="1561" y2="1011" stroke="#000"/><line x1="1613" y1="913" x2="1613" y2="998" stroke="#00e"/><line x1="1672" y1="1057" x2="1672" y2="1094" stroke="#00e"/><line x1="1850" y1="1066" x2="1850" y2="1098" stroke="#00e"/><line x1="1896" y1="978" x2="1896" y2="1037" stroke="#000"/><line x1="1900" y1="1036" x2="1900" y2="1080" stroke="#999"/><line x1="1918" y1="1000" x2="1918" y2="1053" stroke="#00e"/><line x1="2143" y1="1035" x2="2143" y2="1079" stroke="#000"/><line x1="2203" y1="889" x2="2203" y2="982" stroke="#000"/><line x1="2298" y1="1049" x2="2298" y2="1088" stroke="#000"/>
</g>
<g>
<path d="M1364 963 h6 l-3 5z" fill="#999"/><path d="M1390 1070 h6 l-3 5z"/><path d="M1459 932 h6 l-3 5z"/><path d="M1465 1013 h6 l-3 5z" fill="#00e"/><path d="M1508 1002 h6 l-3 5z"/><path d="M1558 928 h6 l-3 5z"/><path d="M1610 908 h6 l-3 5z" fill="#00e"/><path d="M1669 1052 h6 l-3 5z" fill="#00e"/><path d="M1847 1061 h6 l-3 5z" fill="#00e"/><path d="M1893 973 h6 l-3 5z"/><path d="M1897 1031 h6 l-3 5z" fill="#999"/><path d="M1915 995 h6 l-3 5z" fill="#00e"/><path d="M2140 1030 h6 l-3 5z"/><path d="M2200 884 h6 l-3 5z"/><path d="M2295 1044 h6 l-3 5z"/>
</g>
<g font-size="11">
<text x="1361" y="957" fill="#999">iH</text>
<text x="1387" y="1065">y<tspan font-size="8" dy="3">1</tspan></text>
<text x="1456" y="926">y<tspan font-size="8" dy="3">2</tspan></text>
<text x="1462" y="1006" fill="#00e">b<tspan font-size="8" dy="3">3</tspan></text>
<text x="1505" y="996">y<tspan font-size="8" dy="3">3</tspan></text>
<text x="1555" y="921">y<tspan font-size="8" dy="3">4</tspan></text>
<text x="1607" y="901" fill="#00e">b<tspan font-size="8" dy="3">5</tspan></text>
<text x="1666" y="1046" fill="#00e">b<tspan font-size="8" dy="3">6</tspan></text>
<text x="1844" y="1055" fill="#00e">b<tspan font-size="8" dy="3">8</tspan></text>
<text x="1890" y="968">y<tspan font-size="8" dy="3">9</tspan></text>
<text x="1866" y="1025" fill="#999">Prec-++-NH<tspan font-size="8" dy="3">3</tspan></text>
<text x="1912" y="990" fill="#00e">b<tspan font-size="8" dy="3">9</tspan></text>
<text x="2135" y="1025">y<tspan font-size="8" dy="3">12</tspan></text>
<text x="2195" y="878">y<tspan font-size="8" dy="3">13</tspan></text>
<text x="2290" y="1040">y<tspan font-size="8" dy="3">14</tspan></text>
</g>
</svg>

<div class="bb"><span>|</span><span>Ions</span><span>|</span><span>Other</span><span>|</span><span>Loss</span><span>|</span><span>Charge</span><span>|</span><span>De Novo</span><span>|</span><span>Settings</span><span>|</span><span>Export</span><span>|</span><span>Help</span><span>|</span></div>
<div class="a" style="left:1251px;top:1234px;width:1185px;height:2px;background:#1d2b45"></div>
<div class="a" style="left:1251px;top:1236px;width:1185px;height:3px;background:#b9cfe6"></div>
<div class="a" style="left:2203px;top:1239px;width:67px;height:21px;background:linear-gradient(#c6d5e6,#97aec9);border:1px solid #7e8a99;border-radius:0 0 4px 4px;font-size:12px;text-align:center;line-height:21px">Spectrum</div>
<div class="a" style="left:2271px;top:1239px;width:79px;height:21px;background:linear-gradient(#f5f6f8,#dfe2e7);border:1px solid #7e8a99;border-radius:0 0 4px 4px;font-size:12px;text-align:center;line-height:21px">Bubble Plot</div>
<div class="a" style="left:2351px;top:1239px;width:64px;height:21px;background:linear-gradient(#f5f6f8,#dfe2e7);border:1px solid #7e8a99;border-radius:0 0 4px 4px;font-size:12px;text-align:center;line-height:21px">Ion Table</div>

<div class="ttl" style="left:22px;top:1286px">Protein Sequence Coverage (10.2% of exp 97.16% &nbsp;4684 AA)</div>
<div class="ico" style="left:2400px;top:1287px">&#x25BC;_&#x2191;?</div>
<div class="panel" style="left:13px;top:1300px;width:2437px;height:54px"></div>
<div class="a" style="left:54px;top:1327px;width:2351px;height:2px;background:#b8b8b8"></div>
<div class="a" style="left:54px;top:1318px;width:413px;height:19px;background:#dedede"></div>
<div class="a" style="left:484px;top:1318px;width:61px;height:19px;background:#dedede"></div>
<div class="a" style="left:561px;top:1318px;width:1360px;height:19px;background:#dedede"></div>
<div class="a" style="left:1939px;top:1318px;width:282px;height:19px;background:#dedede"></div>
<div class="a" style="left:2239px;top:1318px;width:166px;height:19px;background:#dedede"></div>
<svg class="a" style="left:0;top:1318px" width="2450" height="22"><g fill="#6cc260">
<rect x="153" y="0" width="5" height="19"/><rect x="230" y="0" width="5" height="19"/><rect x="240" y="0" width="5" height="19"/><rect x="652" y="0" width="6" height="19"/><rect x="683" y="0" width="5" height="19"/><rect x="694" y="0" width="6" height="19"/><rect x="733" y="0" width="5" height="19"/><rect x="751" y="0" width="5" height="19"/><rect x="788" y="0" width="5" height="19"/><rect x="956" y="0" width="6" height="19"/><rect x="991" y="0" width="4" height="19"/><rect x="1088" y="0" width="4" height="19"/><rect x="1108" y="0" width="5" height="19"/><rect x="1124" y="0" width="4" height="19"/><rect x="1145" y="0" width="5" height="19"/><rect x="1230" y="0" width="4" height="19"/><rect x="1276" y="0" width="5" height="19"/><rect x="1291" y="0" width="5" height="19"/><rect x="1316" y="0" width="5" height="19"/><rect x="1387" y="0" width="5" height="19"/><rect x="1416" y="0" width="5" height="19"/><rect x="1447" y="0" width="5" height="19"/><rect x="1458" y="0" width="6" height="19"/><rect x="2053" y="0" width="6" height="19"/><rect x="2075" y="0" width="6" height="19"/><rect x="2090" y="0" width="5" height="19"/><rect x="2267" y="0" width="6" height="19"/><rect x="2382" y="0" width="7" height="19"/></g>
<rect x="1434" y="0" width="8" height="19" fill="#1515ee"/>
<rect x="1318" y="19" width="1" height="3" fill="#66c"/>
</svg>
</body></html>
